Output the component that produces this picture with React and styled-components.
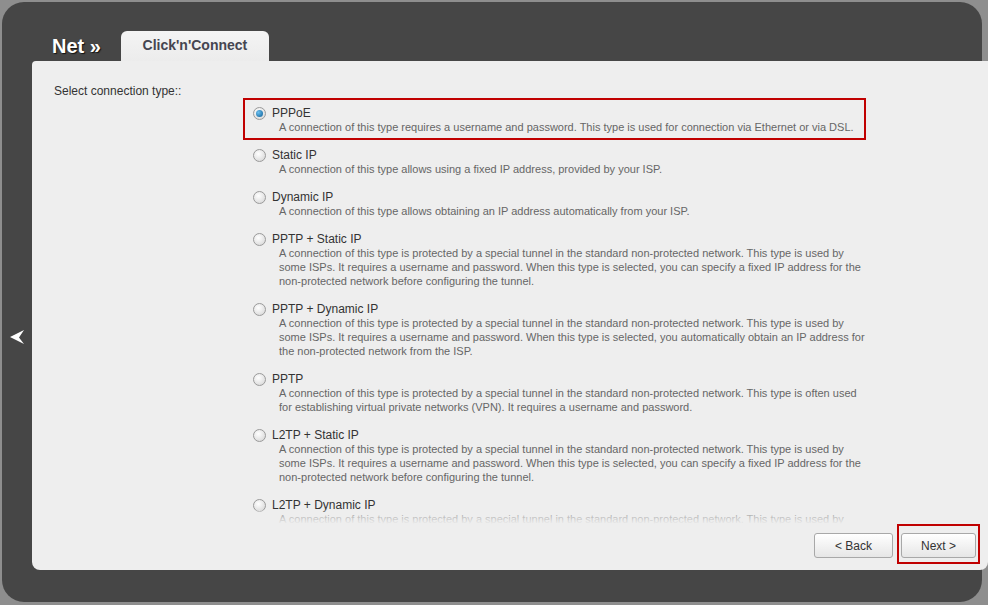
import React, { useState } from 'react';
import styled, { createGlobalStyle } from 'styled-components';

const GlobalStyle = createGlobalStyle`
  html, body {
    margin: 0;
    padding: 0;
    overflow: hidden;
    background: #8e8e8e;
    font-family: "Liberation Sans", Arial, sans-serif;
  }
`;

const Frame = styled.div`
  margin: 2px;
  width: 980px;
  height: 600px;
  background: #464646;
  border-radius: 22px;
  display: flex;
  flex-direction: column;
`;

const Header = styled.div`
  height: 59px;
  display: flex;
  align-items: flex-end;
  padding-left: 50px;
`;

const Crumb = styled.div`
  font-size: 20px;
  font-weight: bold;
  color: #fff;
  line-height: 30px;
  text-shadow: 1px 1px 1px #111;
`;

const Tab = styled.div`
  margin-left: 20px;
  width: 148px;
  height: 30px;
  line-height: 29px;
  background: linear-gradient(#f4f4f4, #ececec);
  border-radius: 6px 6px 0 0;
  text-align: center;
  font-size: 14px;
  font-weight: bold;
  color: #454550;
`;

const Body = styled.div`
  display: flex;
  flex: 1;
`;

const Gutter = styled.div`
  width: 30px;
  padding: 269px 0 0 8px;
  box-sizing: border-box;
`;

const Panel = styled.div`
  width: 956px;
  height: 509px;
  margin-right: -6px;
  background: #eeeeee;
  border-radius: 4px 0 8px 8px;
  display: flex;
  flex-direction: column;
  padding: 23px 0 6px 22px;
  box-sizing: border-box;
`;

const Label = styled.div`
  font-size: 12px;
  line-height: 14px;
  color: #333;
`;

const List = styled.div`
  position: relative;
  margin-left: 189px;
  width: 623px;
  height: 426px;
  overflow: hidden;

  &::after {
    content: '';
    position: absolute;
    left: 0;
    right: 0;
    bottom: 0;
    height: 14px;
    background: linear-gradient(rgba(238, 238, 238, 0.3), #eeeeee);
  }
`;

const Option = styled.label`
  display: block;
  padding: 6px 8px 4px;
  border: 2px solid ${p => (p.$highlight ? '#c00000' : 'transparent')};
  cursor: pointer;
`;

const TitleRow = styled.div`
  display: flex;
  align-items: center;
  font-size: 12px;
  line-height: 14px;
  color: #333;
`;

const Radio = styled.span`
  width: 13px;
  height: 13px;
  box-sizing: border-box;
  border-radius: 50%;
  border: 1px solid #9a9a9a;
  background: radial-gradient(circle at 40% 35%, #ffffff, #d2d2d2);
  margin-right: 6px;
  display: flex;
  align-items: center;
  justify-content: center;

  &::before {
    content: '';
    display: ${p => (p.$checked ? 'block' : 'none')};
    width: 7px;
    height: 7px;
    border-radius: 50%;
    background: radial-gradient(circle at 35% 35%, #6cc0f0, #0a5c94);
  }
`;

const Desc = styled.div`
  margin-left: 26px;
  font-size: 11px;
  line-height: 14px;
  color: #666;
  white-space: nowrap;
`;

const Footer = styled.div`
  display: flex;
  justify-content: flex-end;
  align-items: flex-start;
  padding-right: 8px;
  height: 40px;
`;

const Highlight = styled.div`
  border: 2px solid #c00000;
  padding: 7px 2px 4px;
  margin-left: 4px;
`;

const Button = styled.button`
  width: ${p => p.$w}px;
  height: 25px;
  margin-top: ${p => p.$top || 0}px;
  border: 1px solid #a8a8a8;
  border-radius: 3px;
  background: linear-gradient(#ffffff, #e6e6e6);
  font-family: "Liberation Sans", Arial, sans-serif;
  font-size: 12px;
  color: #333;
  padding: 0;
  cursor: pointer;
`;

const ArrowIcon = () => (
  <svg width="15" height="15" viewBox="0 0 15 15">
    <polygon points="0,7 14,0 9,7.5 14,14" fill="#fff" />
  </svg>
);

const tunnelIntro =
  'A connection of this type is protected by a special tunnel in the standard non-protected network. This type is used by';

const options = [
  {
    id: 'pppoe',
    title: 'PPPoE',
    lines: ['A connection of this type requires a username and password. This type is used for connection via Ethernet or via DSL.'],
  },
  {
    id: 'static',
    title: 'Static IP',
    lines: ['A connection of this type allows using a fixed IP address, provided by your ISP.'],
  },
  {
    id: 'dynamic',
    title: 'Dynamic IP',
    lines: ['A connection of this type allows obtaining an IP address automatically from your ISP.'],
  },
  {
    id: 'pptp-static',
    title: 'PPTP + Static IP',
    lines: [
      tunnelIntro,
      'some ISPs. It requires a username and password. When this type is selected, you can specify a fixed IP address for the',
      'non-protected network before configuring the tunnel.',
    ],
  },
  {
    id: 'pptp-dynamic',
    title: 'PPTP + Dynamic IP',
    lines: [
      tunnelIntro,
      'some ISPs. It requires a username and password. When this type is selected, you automatically obtain an IP address for',
      'the non-protected network from the ISP.',
    ],
  },
  {
    id: 'pptp',
    title: 'PPTP',
    lines: [
      'A connection of this type is protected by a special tunnel in the standard non-protected network. This type is often used',
      'for establishing virtual private networks (VPN). It requires a username and password.',
    ],
  },
  {
    id: 'l2tp-static',
    title: 'L2TP + Static IP',
    lines: [
      tunnelIntro,
      'some ISPs. It requires a username and password. When this type is selected, you can specify a fixed IP address for the',
      'non-protected network before configuring the tunnel.',
    ],
  },
  {
    id: 'l2tp-dynamic',
    title: 'L2TP + Dynamic IP',
    lines: [
      tunnelIntro,
      'some ISPs. It requires a username and password. When this type is selected, you automatically obtain an IP address for',
      'the non-protected network from the ISP.',
    ],
  },
];

const App = () => {
  const [selected, setSelected] = useState('pppoe');

  return (
    <>
      <GlobalStyle />
      <Frame>
        <Header>
          <Crumb>Net »</Crumb>
          <Tab>Click'n'Connect</Tab>
        </Header>
        <Body>
          <Gutter>
            <ArrowIcon />
          </Gutter>
          <Panel>
            <Label>Select connection type::</Label>
            <List>
              {options.map(opt => (
                <Option
                  key={opt.id}
                  $highlight={opt.id === 'pppoe'}
                  onClick={() => setSelected(opt.id)}
                >
                  <TitleRow>
                    <Radio $checked={selected === opt.id} />
                    {opt.title}
                  </TitleRow>
                  {opt.lines.map((line, i) => (
                    <Desc key={i}>{line}</Desc>
                  ))}
                </Option>
              ))}
            </List>
            <Footer>
              <Button $w={79} $top={9}>&lt; Back</Button>
              <Highlight>
                <Button $w={75}>Next &gt;</Button>
              </Highlight>
            </Footer>
          </Panel>
        </Body>
      </Frame>
    </>
  );
};

export default App;
